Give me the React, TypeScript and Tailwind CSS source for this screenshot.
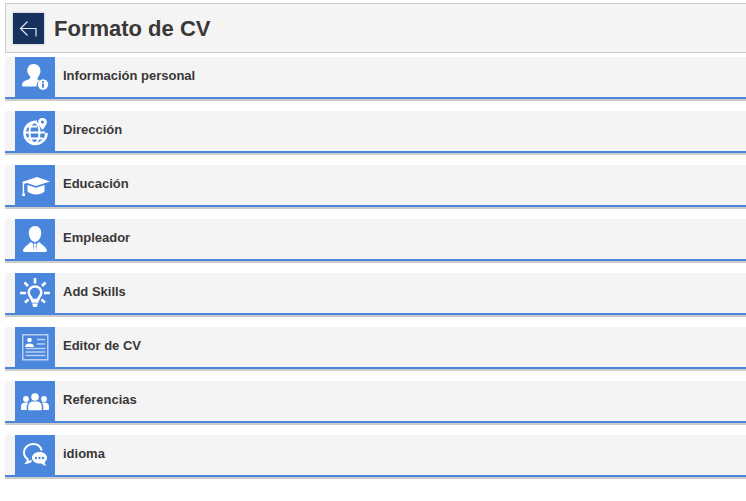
import React from "react";

const W = "#ffffff";
const B = "#4a86dc";

const Person = () => (
  <svg width="40" height="40" viewBox="0 0 40 40">
    <path d="M18.500 7c4.400 0 7 3.100 7 6.800 0 2.900-1.500 5.200-2.700 6.600-.7.800-.5 1.800.4 2.300.5.300 1 .5 1.600.7-2.300 1.200-3.500 3.400-3.300 6.100H8.500C7.400 29.500 7 28.900 7 27.900c0-2.400 1.700-3.800 4.300-4.600 2.100-.7 3.400-1.300 3.800-2 .4-.8.200-1.500-.4-2.200-1.400-1.600-2.400-3.200-2.400-5.500C12.300 9.900 14.700 7 18.500 7z" fill={W} />
    <circle cx="28" cy="27.500" r="5.200" fill={W} />
    <rect x="27" y="26.500" width="2" height="4.200" fill={B} />
    <rect x="27" y="24" width="2" height="1.600" fill={B} />
  </svg>
);

const Globe = () => (
  <svg width="40" height="40" viewBox="0 0 40 40" fill="none" stroke={W} strokeWidth="2">
    <path d="M22 11a11 11 0 1 0 9.500 11" strokeWidth="2.600" />
    <ellipse cx="19.500" cy="21.500" rx="5" ry="10.500" />
    <path d="M9 21.500h21M11 15.500h11M11 27.500h17" />
    <path d="M27.500 7c-2.600 0-4.400 1.900-4.400 4.100 0 2.900 4.400 7.900 4.400 7.900s4.400-5 4.400-7.900C31.900 8.900 30.100 7 27.500 7z" fill={W} stroke="none" />
    <circle cx="27.500" cy="11" r="1.600" fill={B} stroke="none" />
  </svg>
);

const Cap = () => (
  <svg width="40" height="40" viewBox="0 0 40 40" fill={W}>
    <path d="M7 17 22 12l13 4.500L21 21l-9-3.100-3 1z" />
    <path d="M12.500 20 21 22.800l8.500-2.800v6.500c-2 2.100-5 2.900-8.500 2.900-3.500 0-6.500-.9-8.500-2.800z" />
    <rect x="7.700" y="18" width="1.400" height="9.500" />
    <path d="M7.500 27.500h1.800l1 3.500H7z" />
  </svg>
);

const Employee = () => (
  <svg width="40" height="40" viewBox="0 0 40 40" fill={W}>
    <path d="M20 7c3.900 0 6.200 3 6.200 6.800 0 4.200-2.700 9.200-6.200 9.200s-6.200-5-6.200-9.200C13.800 10 16.100 7 20 7z" />
    <path d="M15.800 23 18.100 24.800l.9 8.200H10c-1.600 0-2.300-1-1.800-2.300.8-2.300 2.800-3.400 7.600-7.700z" />
    <path d="M24.200 23 21.900 24.800l-.9 8.200H30c1.600 0 2.300-1 1.800-2.300-.8-2.300-2.800-3.400-7.600-7.700z" />
    <path d="M19 24.500h2l.2 1.500-.4 1.200.5 5.800h-2.600l.5-5.800-.4-1.200z" />
  </svg>
);

const Bulb = () => (
  <svg width="40" height="40" viewBox="0 0 40 40" fill="none" stroke={W}>
    <path d="M20 5v5.500M9.500 9.500l3.500 3.500M30.500 9.500 27 13M5 20h6M29 20h6M10 29.500l3.500-3M30 29.500l-3.500-3" strokeWidth="2.600" />
    <path d="M20 13.500c-3.900 0-6.300 2.900-6.300 6 0 3.200 2.600 4.300 3.300 7.500h6c.7-3.200 3.300-4.300 3.300-7.500 0-3.100-2.400-6-6.300-6z" strokeWidth="2.500" fill="none" />
    <path d="M16.500 27.500h7v2.200h-7zM17 30.500h6l-1.200 3.500h-3.600z" fill={W} stroke="none" />
  </svg>
);

const Card = () => (
  <svg width="40" height="40" viewBox="0 0 40 40" fill="none" stroke="#b9d0f2">
    <rect x="7.750" y="7.750" width="25" height="25" strokeWidth="1.500" />
    <circle cx="14.500" cy="13" r="2.300" fill={W} stroke="none" />
    <path d="M10 20c.2-2.500 2-3.400 4.500-3.400s4.300.9 4.500 3.400z" fill={W} stroke="none" />
    <path d="M22 12.500h8M22 17h8M10.500 21.500h20M10.500 25h20M10.500 28.500h20" strokeWidth="1.400" />
  </svg>
);

const Group = () => (
  <svg width="40" height="40" viewBox="0 0 40 40" fill={W}>
    <circle cx="11" cy="18" r="2.900" />
    <circle cx="29" cy="18" r="2.900" />
    <circle cx="20" cy="16" r="3.800" />
    <path d="M6 28.500v-3c0-2.400 1.700-4 4.500-4h2.800c-1 1.200-1.600 2.600-1.600 4.200V29H6.700c-.4 0-.7-.2-.7-.5z" />
    <path d="M34 28.500v-3c0-2.400-1.700-4-4.500-4h-2.800c1 1.200 1.600 2.600 1.600 4.200V29h5c.4 0 .7-.2.700-.5z" />
    <path d="M13.200 28.800v-3.300c0-3 2.200-5 5-5h3.600c2.800 0 5 2 5 5v3.300c0 .2-.3.400-.7.400H13.900c-.4 0-.7-.2-.7-.4z" />
  </svg>
);

const Chat = () => (
  <svg width="40" height="40" viewBox="0 0 40 40">
    <path d="M16.500 25.500c-1 1-2.500 1.900-4.800 2.300 1-1.100 1.300-2.100 1.100-3.400C10.500 22.600 9 20 9 17.500 9 12.800 13 9 18 9c4.300 0 7.700 2.600 8.700 6.500" fill="none" stroke={W} strokeWidth="2" />
    <path d="M24.500 17c4.200 0 7.500 2.500 7.500 5.800 0 1.800-.9 3.200-2.200 4.100 0 1.600.5 2.800 2.200 4.100-2.500-.2-4.500-1.200-5.700-2.400C20.500 28.900 17 26.300 17 22.800 17 19.500 20.300 17 24.500 17z" fill={W} />
    <circle cx="21" cy="23" r="1.200" fill={B} />
    <circle cx="24.500" cy="23" r="1.200" fill={B} />
    <circle cx="28" cy="23" r="1.200" fill={B} />
  </svg>
);

const rows: [string, React.ReactNode][] = [
  ["Información personal", <Person />],
  ["Dirección", <Globe />],
  ["Educación", <Cap />],
  ["Empleador", <Employee />],
  ["Add Skills", <Bulb />],
  ["Editor de CV", <Card />],
  ["Referencias", <Group />],
  ["idioma", <Chat />],
];

export default function App() {
  return (
    <div className="h-[501px] w-[746px] overflow-hidden bg-white pl-[5px] pt-[3px] font-['Liberation_Sans',Arial,sans-serif] text-[#3a3737]">
      <header className="flex h-[50px] items-center gap-[10px] border border-r-0 border-[#cccccc] bg-[#f4f4f4] pl-[7px]">
        <div className="flex h-[31px] w-[31px] items-center justify-center bg-[#17325f] shadow-[0_0_2px_rgba(0,0,0,0.3)]">
          <svg width="20" height="18" viewBox="0 0 20 18" fill="none" stroke="#dfe6f0" strokeWidth="1.200">
            <path d="M8.500 2.500 1.500 9.500l7 7M1.500 9.500h15.500v8" />
          </svg>
        </div>
        <h1 className="pt-[2px] text-[22px] font-bold leading-none">Formato de CV</h1>
      </header>
      <ul className="mt-[4px] flex flex-col gap-[10px]">
        {rows.map(([label, icon]) => (
          <li key={label} className="flex h-[44px] border-b-2 border-[#cccccc]">
            <div className="flex h-[42px] w-full border-b-2 border-[#4a86dc] bg-[#f4f4f4] pl-[10px]">
              <div className="flex h-[40px] w-[40px] items-center justify-center bg-[#4a86dc]">{icon}</div>
              <span className="self-center pb-[4px] pl-[8px] text-[13px] font-bold leading-none">{label}</span>
            </div>
          </li>
        ))}
      </ul>
    </div>
  );
}
